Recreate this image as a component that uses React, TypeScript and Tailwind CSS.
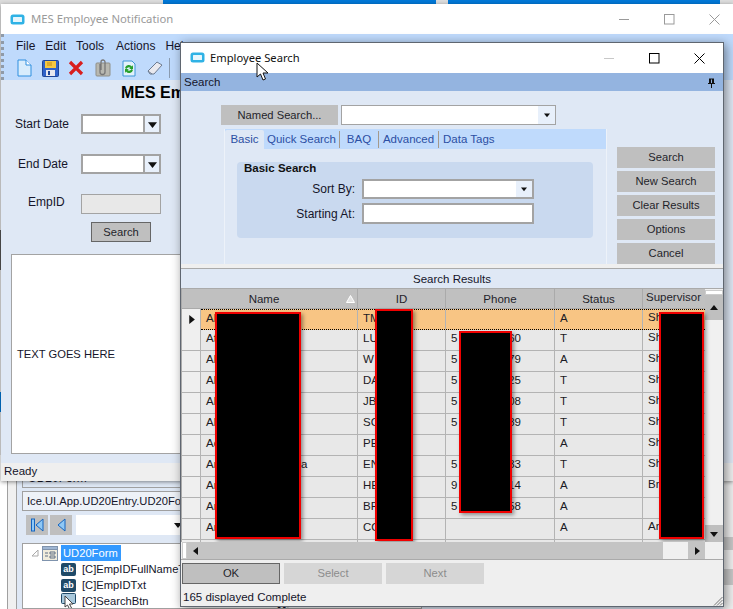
import React from 'react';

const ui = "font-['Liberation_Sans',Arial,sans-serif]";

// name, name tail, id, phone start, phone end, status, supervisor
const rows = [
  ['Al', '', 'TM', '', '', 'A', 'Sh'],
  ['At', '', 'LU', '5', '60', 'T', 'Sh'],
  ['Al', '', 'W', '5', '79', 'A', 'Sh'],
  ['Al', '', 'DA', '5', '25', 'T', 'Sh'],
  ['Al', '', 'JB', '5', '08', 'T', 'Sh'],
  ['Al', '', 'SC', '5', '89', 'T', 'Sh'],
  ['Ac', '', 'PE', '', '', 'A', 'Sh'],
  ['An', 'a', 'EN', '5', '33', 'T', 'Sh'],
  ['An', '', 'HE', '9', '14', 'A', 'Br'],
  ['An', '', 'BR', '5', '58', 'A', ''],
  ['An', '', 'CO', '', '', 'A', 'An'],
  ['', '', '', '', '', '', ''],
];

const AppIcon = () => (
  <svg width="15" height="11" viewBox="0 0 15 11">
    <rect x="0.5" y="0.5" width="14" height="10" rx="2.5" fill="#2fb2e5" />
    <rect x="3" y="3" width="9" height="5" rx="0.5" fill="#e6f6fd" />
  </svg>
);

const Arrow = ({ dir = 'down', size = 8 }: { dir?: 'down' | 'up' | 'left' | 'right'; size?: number }) => {
  const pts = { down: '0,2 8,2 4,7', up: '0,6 8,6 4,1', left: '6,0 6,8 1,4', right: '2,0 2,8 7,4' }[dir];
  return (
    <svg width={size} height={size} viewBox="0 0 8 8">
      <polygon points={pts} fill="#111" />
    </svg>
  );
};

const WinButtons = ({ color, minColor, gap }: { color: string; minColor: string; gap: string }) => (
  <div className={`flex items-center ${gap}`}>
    <svg width="11" height="11" viewBox="0 0 11 11"><path d="M0 5.5H10" stroke={minColor} /></svg>
    <svg width="11" height="11" viewBox="0 0 11 11"><rect x="0.5" y="0.5" width="9.5" height="9.5" fill="none" stroke={color} /></svg>
    <svg width="11" height="11" viewBox="0 0 11 11"><path d="M0.5 0.5L10.5 10.5M10.5 0.5L0.5 10.5" stroke={color} /></svg>
  </div>
);

const Select = ({ width, arrowBox }: { width: string; arrowBox?: boolean }) => (
  <div className={`${width} h-[20px] flex bg-white border-2 border-[#a3a3a3]`}>
    <div className="flex-1" />
    <div className={`w-[16px] flex items-center justify-center bg-[#e8f0fb] ${arrowBox ? 'border-l-2 border-[#a3a3a3]' : ''}`}>
      <Arrow size={arrowBox ? 9 : 6} />
    </div>
  </div>
);

const GreyBtn = ({ children, className = '' }: { children: React.ReactNode; className?: string }) => (
  <div className={`flex items-center justify-center bg-[#bfbfbf] text-[11.2px] text-[#1f1f2b] ${className}`}>{children}</div>
);

const Toolbar = () => (
  <div className="flex items-center h-[22px] pb-[2px] pl-[12px] gap-[9px]">
    <svg width="16" height="18" viewBox="0 0 16 18">
      <path d="M2 1H10L15 6V17H2Z" fill="#d8ecfc" stroke="#2e8fe0" />
      <path d="M10 1V6H15" fill="#fff" stroke="#2e8fe0" />
    </svg>
    <svg width="17" height="17" viewBox="0 0 17 17" className="ml-[1px]">
      <rect x="0.5" y="0.5" width="16" height="16" rx="1" fill="#2f62c9" stroke="#1f4596" />
      <rect x="3" y="1" width="11" height="7" fill="#f5c842" />
      <path d="M5 3H10M5 5H10" stroke="#c48a15" />
      <rect x="4" y="10" width="9" height="6" fill="#e8e8ee" />
      <rect x="6" y="11" width="2" height="4" fill="#1f4596" />
    </svg>
    <svg width="16" height="16" viewBox="0 0 16 16">
      <path d="M2 2L14 14M14 2L2 14" stroke="#d81e1e" strokeWidth="3.2" />
    </svg>
    <svg width="16" height="18" viewBox="0 0 16 18" className="ml-[2px]">
      <rect x="1" y="4" width="14" height="13" rx="1" fill="#b8b8b0" stroke="#8f8f88" />
      <path d="M5 5V13a2.5 2.5 0 0 0 5 0V3a2 2 0 0 0-4 0V11" fill="none" stroke="#777" strokeWidth="1.3" />
    </svg>
    <svg width="14" height="17" viewBox="0 0 14 17" className="ml-[2px]">
      <path d="M1 1H10L13 4V16H1Z" fill="#e2f1fb" stroke="#3c95d8" />
      <path d="M3 8a4 4 0 0 1 7-1.5L11 5V9H7L8.5 8A2.5 2.5 0 0 0 4.500 9Z" fill="#27a02c" />
      <path d="M11 10a4 4 0 0 1-7 1.500L3 13V9H7L5.500 10A2.500 2.500 0 0 0 9.500 9Z" fill="#27a02c" />
    </svg>
    <svg width="16" height="16" viewBox="0 0 16 16" className="ml-[2px]">
      <path d="M1 11L10 2L15 5L7 14H3Z" fill="#e9e9ef" stroke="#6b7a90" />
      <path d="M1 11L5 14" stroke="#6b7a90" />
    </svg>
    <div className="w-px h-[20px] bg-[#8a9bb0] -ml-[3px]" />
  </div>
);

const MesWindow = () => (
  <div className="absolute left-[1px] top-[4px] w-[732px] h-[477px] flex flex-col bg-[#dfe8f5] shadow-[0_1px_4px_rgba(0,0,0,0.45)]">
    <div className="h-[30px] shrink-0 bg-white flex items-center justify-between pl-[9px] pr-[13px]">
      <div className="flex items-center gap-[6px]">
        <AppIcon />
        <span className="font-['Noto_Sans',sans-serif] text-[11.3px] text-[#9a9a9a]">MES Employee Notification</span>
      </div>
      <WinButtons color="#9a9a9a" minColor="#9a9a9a" gap="gap-[34px]" />
    </div>
    <div className="h-[46px] shrink-0 bg-[#bfdafc] border-l-[3px] border-dotted border-[#8f9aa8] flex flex-col">
      <div className="h-[24px] flex items-center pl-[12px] text-[12px] text-[#15152a] gap-[10px]">
        <span>File</span>
        <span>Edit</span>
        <span>Tools</span>
        <span className="ml-[2px]">Actions</span>
        <span>Help</span>
      </div>
      <Toolbar />
    </div>
    <div className="flex-1 flex flex-col pl-[1px]">
      <div className="h-[18px] mt-[4px] ml-[119px] text-[16px] leading-[18px] font-bold whitespace-nowrap text-black">
        MES Employee Notification
      </div>
      <div className="flex items-center mt-[12px] h-[20px]">
        <span className="w-[79px] pl-[13px] text-[12px] text-[#15152a]">Start Date</span>
        <Select width="w-[80px]" arrowBox />
      </div>
      <div className="flex items-center mt-[20px] h-[20px]">
        <span className="w-[79px] pl-[16px] text-[12px] text-[#15152a]">End Date</span>
        <Select width="w-[80px]" arrowBox />
      </div>
      <div className="flex items-center mt-[20px] h-[20px]">
        <span className="w-[79px] pl-[26px] pb-[4px] text-[12px] text-[#15152a]">EmpID</span>
        <div className="w-[80px] h-[20px] bg-[#e8e8e8] border border-[#a3a3a3]" />
      </div>
      <GreyBtn className="mt-[8px] ml-[89px] w-[60px] h-[20px] border border-[#666]">Search</GreyBtn>
      <div className="mt-[12px] ml-[9px] w-[600px] h-[200px] bg-white border border-[#a3a3a3] flex items-center pl-[5px] text-[11.2px] text-[#15152a]">
        TEXT GOES HERE
      </div>
    </div>
    <div className="h-[18px] shrink-0 bg-[#efefef] pl-[3px] text-[11.5px] leading-[16px] text-[#15152a]">Ready</div>
  </div>
);

const SearchPane = () => (
  <div className="h-[173px] shrink-0 bg-[#dfe8f5] flex">
    <div className="w-[426px] shrink-0 flex flex-col pt-[14px]">
      <div className="flex ml-[40px] gap-[3px]">
        <GreyBtn className="w-[117px] h-[20px]">Named Search...</GreyBtn>
        <div className="w-[215px] h-[20px] flex bg-white border border-[#a3a3a3]">
          <div className="flex-1" />
          <div className="w-[17px] flex items-center justify-center bg-[#e8f0fb]"><Arrow size={6} /></div>
        </div>
      </div>
      <div className="mt-[4px] ml-[43px] w-[383px] flex-1 flex flex-col border-x border-[#edf2f9]">
        <div className="h-[20px] shrink-0 bg-[#bfdafc] flex items-center pt-[1px] text-[11.5px] text-[#2c4fa3]">
          <span className="w-[39px] leading-[19px] text-center bg-[#dfe8f5] rounded-t-[2px]">Basic</span>
          <span className="w-[76px] text-center border-r border-[#a59a8a]">Quick Search</span>
          <span className="w-[39px] text-center border-r border-[#a59a8a]">BAQ</span>
          <span className="w-[60px] text-center border-r border-[#a59a8a]">Advanced</span>
          <span className="pl-[4px]">Data Tags</span>
        </div>
        <div className="mt-[13px] ml-[12px] w-[356px] h-[76px] bg-[#c9d9ef] rounded-[4px] flex flex-col">
          <div className="h-[17px] pl-[7px] text-[11.5px] leading-[12px] font-bold text-[#111]">Basic Search</div>
          <div className="flex items-center h-[20px] text-[12px] text-[#15152a]">
            <span className="w-[118px] text-right">Sort By:</span>
            <div className="ml-[7px]"><Select width="w-[172px]" /></div>
          </div>
          <div className="flex items-center h-[21px] mt-[4px] text-[12px] text-[#15152a]">
            <span className="w-[118px] text-right">Starting At:</span>
            <div className="ml-[7px] w-[172px] h-[21px] bg-white border-2 border-[#a3a3a3]" />
          </div>
        </div>
      </div>
    </div>
    <div className="ml-[10px] w-[98px] flex flex-col gap-[3px] pt-[56px]">
      <GreyBtn className="h-[21px]">Search</GreyBtn>
      <GreyBtn className="h-[21px]">New Search</GreyBtn>
      <GreyBtn className="h-[21px]">Clear Results</GreyBtn>
      <GreyBtn className="h-[21px]">Options</GreyBtn>
      <GreyBtn className="h-[21px]">Cancel</GreyBtn>
    </div>
  </div>
);

const Grid = () => (
  <div className="relative h-[253px] shrink-0 overflow-hidden flex bg-[#e8e8e8]">
    <div className="w-[1px] bg-[#aaa]" />
    <div className="w-[523px] flex flex-col text-[11.5px] text-[#1a1a24]">
      <div className="h-[20px] shrink-0 flex bg-[#c0c0c0] border-b border-[#aaa] text-[#1f1f2b]">
        <div className="w-[19px]" />
        <div className="relative w-[157px] text-center leading-[20px] border-r border-[#aaa] pr-[30px]">
          Name
          <svg width="9" height="8" viewBox="0 0 9 8" className="absolute right-[2px] top-[6px]">
            <polygon points="4.500,0.500 8.500,7.500 0.500,7.500" fill="#e4e4e4" stroke="#fff" />
          </svg>
        </div>
        <div className="w-[88px] text-center leading-[20px] border-r border-[#aaa]">ID</div>
        <div className="w-[109px] text-center leading-[20px] border-r border-[#aaa]">Phone</div>
        <div className="w-[88px] text-center leading-[20px] border-r border-[#aaa]">Status</div>
        <div className="w-[62px] pl-[3px] leading-[16px] whitespace-nowrap">Supervisor</div>
      </div>
      {rows.map((r, i) => (
        <div
          key={i}
          className={`h-[21px] shrink-0 flex leading-[16px] ${i === 0 ? 'bg-[#f8c584]' : 'bg-[#e8e8e8] border-b border-[#b3b3b3]'}`}
        >
          <div className="w-[19px] shrink-0 bg-[#efefef] border-r border-[#b3b3b3] flex items-center justify-center">
            {i === 0 && <Arrow dir="right" size={9} />}
          </div>
          <div className={`flex flex-1 ${i === 0 ? 'border-y border-dotted border-black' : ''}`}>
            <div className="w-[157px] shrink-0 pl-[5px] border-r border-[#b3b3b3] flex">
              <span>{r[0]}</span>
              {r[1] && <span className="ml-[81px]">{r[1]}</span>}
            </div>
            <div className="w-[88px] shrink-0 pl-[5px] border-r border-[#b3b3b3]">{r[2]}</div>
            <div className="w-[109px] shrink-0 pl-[5px] pr-[33px] border-r border-[#b3b3b3] flex justify-between">
              <span>{r[3]}</span>
              <span>{r[4]}</span>
            </div>
            <div className="w-[88px] shrink-0 pl-[5px] border-r border-[#b3b3b3]">{r[5]}</div>
            <div className="w-[61px] shrink-0 pl-[5px] leading-[14px]">{r[6]}</div>
          </div>
        </div>
      ))}
    </div>
    <div className="w-[18px] flex flex-col bg-[#f0f0f0]">
      <div className="h-[5px] mt-[1px] bg-white border border-[#ccc]" />
      <div className="h-[25px] bg-[#bfbfbf] flex items-center justify-center"><Arrow dir="up" /></div>
      <div className="flex-1" />
      <div className="h-[17px] bg-[#bfbfbf] flex items-center justify-center"><Arrow /></div>
    </div>
    <div className="absolute left-[34px] top-[23px] w-[86px] h-[227px] bg-black border-2 border-[#f00000] shadow-[2px_2px_4px_rgba(0,0,0,0.4)]" />
    <div className="absolute left-[194px] top-[20px] w-[38px] h-[232px] bg-black border-2 border-[#f00000] shadow-[2px_2px_4px_rgba(0,0,0,0.4)]" />
    <div className="absolute left-[278px] top-[42px] w-[53px] h-[182px] bg-black border-2 border-[#f00000] shadow-[2px_2px_4px_rgba(0,0,0,0.4)]" />
    <div className="absolute left-[478px] top-[23px] w-[45px] h-[227px] bg-black border-2 border-[#f00000] shadow-[2px_2px_4px_rgba(0,0,0,0.4)]" />
  </div>
);

const SearchWindow = () => (
  <div className="absolute left-[180px] top-[42px] w-[544px] h-[565px] flex flex-col bg-[#efefef] border border-[#5f6670] shadow-[2px_2px_10px_rgba(0,0,0,0.45)]">
    <div className="h-[30px] shrink-0 bg-white flex items-center justify-between pl-[9px] pr-[18px]">
      <div className="flex items-center gap-[5px]">
        <AppIcon />
        <span className="font-['Noto_Sans',sans-serif] text-[11.2px] text-[#111]">Employee Search</span>
      </div>
      <WinButtons color="#000" minColor="#c8c8c8" gap="gap-[34px]" />
    </div>
    <div className="h-[18px] shrink-0 bg-[#94b4e0] flex items-center justify-between pl-[3px] pr-[7px] pt-[1px] text-[11.5px] text-[#15152a]">
      Search
      <svg width="9" height="10" viewBox="0 0 9 10">
        <path d="M2 0.500H7V5H8V6H1V5H2ZM4 1.500V5H5V1.500ZM4 6H5V10H4Z" fill="#111" fillRule="evenodd" />
      </svg>
    </div>
    <SearchPane />
    <div className="h-[4px] shrink-0 bg-[#efefef]" />
    <div className="h-[21px] shrink-0 bg-[#dfe8f5] border-t border-[#aaa] border-b text-center text-[11.500px] leading-[21px] text-[#15152a]">
      Search Results
    </div>
    <Grid />
    <div className="h-[18px] shrink-0 flex pl-[1px] bg-[#f0f0f0] border-b border-[#aaa]">
      <div className="w-[5px] bg-white border border-[#ccc]" />
      <div className="w-[476px] bg-[#c4c4c4] flex items-center pl-[5px]"><Arrow dir="left" /></div>
      <div className="w-[25px]" />
      <div className="w-[17px] bg-[#c4c4c4] flex items-center justify-center"><Arrow dir="right" /></div>
    </div>
    <div className="flex gap-[4px] pl-[1px] mt-[3px] text-[11.2px]">
      <GreyBtn className="w-[98px] h-[21px] border border-[#666]">OK</GreyBtn>
      <div className="w-[98px] h-[21px] flex items-center justify-center bg-[#d6d6d6] text-[#8c8c8c]">Select</div>
      <div className="w-[98px] h-[21px] flex items-center justify-center bg-[#d6d6d6] text-[#8c8c8c]">Next</div>
    </div>
    <div className="relative flex-1 flex items-center pl-[2px] pt-[5px] text-[11.500px] text-[#15152a]">
      165 displayed Complete
      <svg width="10" height="10" viewBox="0 0 10 10" className="absolute right-0 bottom-0">
        <path d="M9.500 1L1 9.500M9.500 4L4 9.500M9.500 7L7 9.500" stroke="#777" />
      </svg>
    </div>
  </div>
);

const TreeRow = ({ icon, label }: { icon: React.ReactNode; label: string }) => (
  <div className="h-[16px] flex items-center pl-[38px] gap-[6px] text-[11.2px] text-[#15152a] whitespace-nowrap">
    {icon}
    <span>{label}</span>
  </div>
);

const AbIcon = () => (
  <div className="w-[15px] h-[13px] rounded-[2px] bg-[#1f4a68] text-white text-[9px] leading-[13px] text-center font-bold">ab</div>
);

const BackWindow = () => (
  <div className="absolute left-0 right-0 top-[455px] bottom-0 flex bg-white">
    <div className="w-[7px] shrink-0" />
    <div className="w-[10px] shrink-0 bg-[#f0f0f0] border-x border-[#a0a0a0]" />
    <div className="flex-1 bg-[#dfe8f5] pl-[5px] flex flex-col">
      <div className="h-[33px] shrink-0 w-[400px] border border-[#a0a0a0] flex items-end pl-[5px] text-[12px] text-[#15152a]">UD20Form</div>
      <div className="mt-[3px] h-[20px] shrink-0 w-[400px] bg-[#eef2f8] border border-[#a0a0a0] pl-[4px] text-[11.2px] leading-[18px] text-[#15152a] whitespace-nowrap">
        Ice.UI.App.UD20Entry.UD20Form
      </div>
      <div className="mt-[4px] h-[20px] shrink-0 flex items-center gap-[2px] pl-[4px]">
        <div className="w-[22px] h-[20px] bg-[#bfbfbf] flex items-center justify-center">
          <svg width="13" height="14" viewBox="0 0 13 14">
            <rect x="0.500" y="1" width="3" height="12" fill="#8fc8f5" stroke="#1565c0" />
            <polygon points="12,1 12,13 5,7" fill="#8fc8f5" stroke="#1565c0" />
          </svg>
        </div>
        <div className="w-[22px] h-[20px] bg-[#bfbfbf] flex items-center justify-center">
          <svg width="9" height="14" viewBox="0 0 9 14">
            <polygon points="8,1 8,13 1,7" fill="#8fc8f5" stroke="#1565c0" />
          </svg>
        </div>
        <div className="ml-[2px] w-[110px] h-[20px] bg-white flex items-center justify-end pr-[4px]"><Arrow /></div>
      </div>
      <div className="mt-[8px] flex-1 w-[400px] bg-white border border-[#a0a0a0] overflow-hidden pt-[1px]">
        <div className="h-[16px] flex items-center pl-[8px] text-[11.2px]">
          <svg width="8" height="8" viewBox="0 0 8 8"><polygon points="7,1 7,7 1,7" fill="#fff" stroke="#aaa" /></svg>
          <svg width="16" height="15" viewBox="0 0 16 15" className="ml-[3px]">
            <rect x="0.500" y="0.500" width="15" height="14" fill="#f0ecdc" stroke="#7f93ad" />
            <rect x="0.500" y="0.500" width="15" height="3" fill="#9fb6d3" stroke="#7f93ad" />
            <path d="M3 7H6M3 10H6M8 6H13V8H8ZM8 10H13V12H8Z" fill="none" stroke="#5f6f85" />
          </svg>
          <span className="ml-[3px] w-[60px] h-[16px] pl-[2px] leading-[16px] bg-[#3399ff] text-white">UD20Form</span>
        </div>
        <TreeRow icon={<AbIcon />} label="[C]EmpIDFullNameTxt" />
        <TreeRow icon={<AbIcon />} label="[C]EmpIDTxt" />
        <TreeRow
          icon={
            <svg width="15" height="16" viewBox="0 0 15 16">
              <rect x="0.500" y="0.500" width="14" height="10" rx="1" fill="#a8c8dc" stroke="#1f4a68" />
              <path d="M4 3V14L6.500 12L8.500 16L10.500 15L8.500 11H12Z" fill="#fff" stroke="#444" />
            </svg>
          }
          label="[C]SearchBtn"
        />
        <div className="h-[16px] -mt-[7px] pl-[254px] text-[11.2px] font-bold text-[#15152a]">Misc</div>
      </div>
    </div>
    <div className="w-[10px] shrink-0 flex flex-col bg-[#f0f0f0]">
      <div className="h-[82px] shrink-0" />
      <div className="h-[13px] shrink-0 bg-[#c8c8c8]" />
      <div className="h-[19px] shrink-0" />
      <div className="h-[16px] shrink-0 bg-[#c8c8c8]" />
    </div>
  </div>
);

const Pointer = () => (
  <svg width="13" height="19" viewBox="0 0 13 19" className="absolute left-[256px] top-[62px]">
    <path d="M1 1V15L4.500 12L7 18L9.500 17L7 11H12Z" fill="#fff" stroke="#111" />
  </svg>
);

export default function App() {
  return (
    <div className={`relative w-[733px] h-[609px] overflow-hidden bg-[#e4e4e4] ${ui}`}>
      <div className="flex h-[4px]">
        <div className="w-[163px] bg-[#dcdcdc]" />
        <div className="w-[273px] bg-[#0078d7]" />
        <div className="w-[12px] bg-[#dcdcdc]" />
        <div className="w-[272px] bg-[#0078d7]" />
        <div className="flex-1 bg-[#dcdcdc]" />
      </div>
      <div className="absolute left-0 top-[230px] w-px h-[40px] bg-[#555]" />
      <div className="absolute left-0 top-[392px] w-px h-[20px] bg-[#0078d7]" />
      <BackWindow />
      <MesWindow />
      <SearchWindow />
      <Pointer />
    </div>
  );
}
